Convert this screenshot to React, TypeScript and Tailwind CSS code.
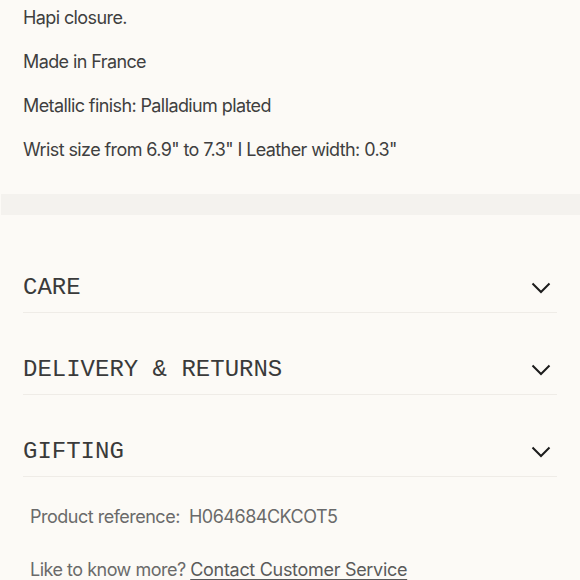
const details = [
  'Hapi closure.',
  'Made in France',
  'Metallic finish: Palladium plated',
  'Wrist size from 6.9" to 7.3" I Leather width: 0.3"',
]

const sections = ['CARE', 'DELIVERY & RETURNS', 'GIFTING']

function Chevron() {
  return (
    <svg width="20" height="12" viewBox="0 0 20 12" fill="none">
      <polyline points="1.5,1.5 10,10 18.5,1.5" stroke="#1c1c1c" strokeWidth="2" />
    </svg>
  )
}

export default function App() {
  return (
    <div className="w-[580px] h-[580px] overflow-hidden bg-[#fcfaf6] font-['Inter',sans-serif]">
      <div className="-mt-[4px] px-[23px] text-[18px] text-[#3f3f3f] tracking-[-0.6px]">
        {details.map((line, i) => (
          <p key={i} className="leading-[44px]">{line}</p>
        ))}
      </div>

      <div className="mt-[22px] ml-px h-[21px] bg-[#f4f2ee]" />

      <div className="mt-[16px] px-[23px]">
        {sections.map((title) => (
          <div
            key={title}
            className="flex items-center justify-between pt-[45px] pb-[12px] border-b border-[#efece7]"
          >
            <span className="font-['Liberation_Mono',monospace] text-[24px] leading-[24px] text-[#3a3a3a]">
              {title}
            </span>
            <span className="mr-[6px]">
              <Chevron />
            </span>
          </div>
        ))}
      </div>

      <div className="px-[30px] text-[18px] text-[#6a6a6a] tracking-[-0.5px]">
        <p className="mt-[27px] leading-[26px]">
          Product reference:&nbsp; H064684CKCOT5
        </p>
        <p className="mt-[27px] leading-[26px]">
          Like to know more?&nbsp;
          <a className="underline underline-offset-[3px] tracking-[-0.3px] text-[#5a5a5a]">Contact Customer Service</a>
        </p>
      </div>
    </div>
  )
}
